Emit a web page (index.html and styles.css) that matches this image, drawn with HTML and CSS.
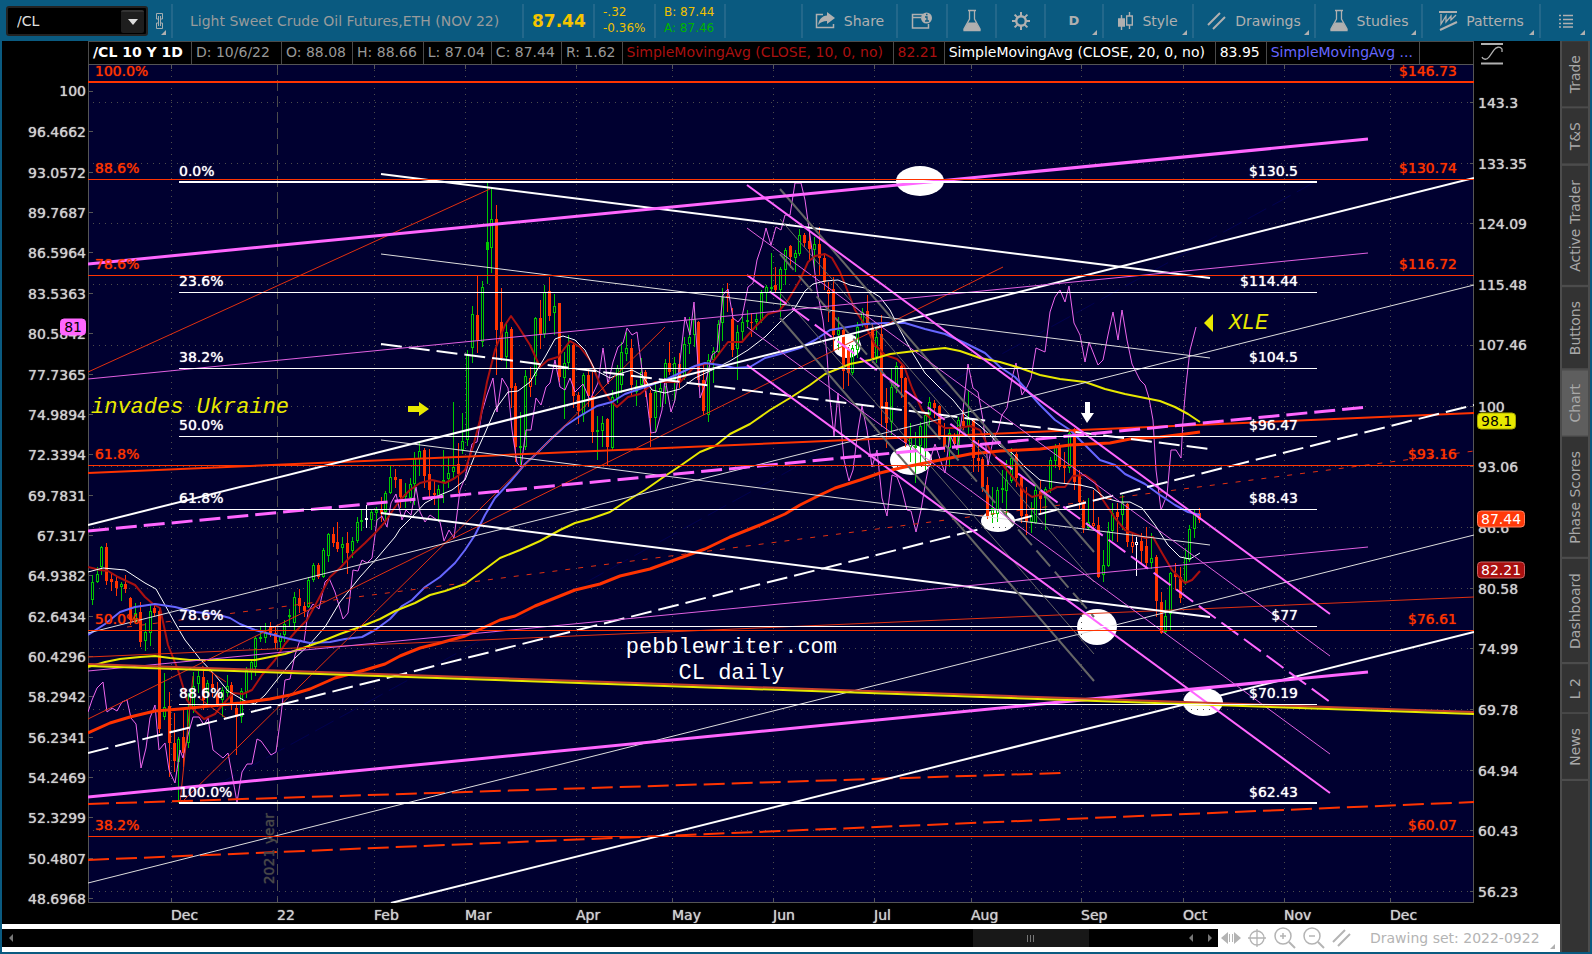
FILE: index.html
```html
<!DOCTYPE html>
<html lang="en">
<head>
<meta charset="utf-8">
<meta name="viewport" content="width=device-width,initial-scale=1.0">
<title>/CL - Charts</title>
<link rel="stylesheet" href="styles.css">
</head>
<body>
<header class="toolbar">
	<div class="symbol_box">
		<input class="symbol" type="text" value="/CL" aria-label="Symbol">
		<button class="drop" aria-label="Symbol list"><svg width="12" height="6" viewBox="0 0 12 6"><path d="M1 0h10L6 6z"/></svg></button>
	</div>
	<button class="tool link" aria-label="Link">
		<svg width="10" height="18" viewBox="0 0 10 18" fill="none" stroke="#a5adb0" stroke-width="1"><path d="M3.500 7H1.500V1.500h6V7H5.500M3.500 11H1.500v5.500h6V11H5.500M3.500 4v10M5.500 4v10"/></svg>
	</button>
	<div class="name">Light Sweet Crude Oil Futures,ETH (NOV 22)</div>
	<div class="last">87.44</div>
	<div class="quote change"><span>-.32</span><span>-0.36%</span></div>
	<div class="quote bidask"><span>B: 87.44</span><span class="ask">A: 87.46</span></div>
	<div class="space"></div>
	<button class="tool share">
		<svg width="21" height="18" viewBox="0 0 21 18"><path d="M8 2.500H1.500v13h17V12" fill="none" stroke="#b0b0b0" stroke-width="1.500"/><path d="M12 0l8 6-8 6V9c-4 0-6 1-9 4 1-6 4-9 9-9.500z" fill="#b0b0b0"/></svg>
		Share
	</button>
	<button class="tool cal" aria-label="Events">
		<svg width="22" height="18" viewBox="0 0 22 18"><path d="M12 2.500H1.500V16h16v-4M1.500 5.500H10" fill="none" stroke="#b0b0b0" stroke-width="1.500"/><circle cx="15.500" cy="6" r="5.500" fill="#b0b0b0"/><path d="M14 5h2v4m-2 0h4M15 2.500h1.500" stroke="#0b5b80" stroke-width="1.300" fill="none"/></svg>
	</button>
	<button class="tool sq" aria-label="Edit studies">
		<svg width="20" height="24" viewBox="0 0 20 24"><path d="M6 1.500h8M7.500 2v8L2 20v1.500h16V20l-5.500-10V2" fill="none" stroke="#b0b0b0" stroke-width="1.300"/><path d="M6 13.500h8l4.500 7.500H1.500z" fill="#b0b0b0"/></svg>
	</button>
	<button class="tool sq" aria-label="Settings">
		<svg width="20" height="20" viewBox="0 0 20 20" fill="none" stroke="#b0b0b0"><circle cx="10" cy="10" r="4.800" stroke-width="2.400"/><path d="M10 1v4M10 15v4M1 10h4M15 10h4M3.600 3.600l3 3M13.400 13.400l3 3M3.600 16.400l3-3M13.400 6.600l3-3" stroke-width="2"/></svg>
	</button>
	<button class="tool period menu">D</button>
	<button class="tool style menu">
		<svg width="16" height="18" viewBox="0 0 16 18" fill="none" stroke="#b0b0b0" stroke-width="1.400"><path d="M3.500 3v15M11.500 0v4M11.500 13v4M8.700 4h5.600v9H8.700z"/><path d="M.700 7h5.600v7H.700z" fill="#b0b0b0"/></svg>
		Style
	</button>
	<button class="tool drawings menu">
		<svg width="20" height="20" viewBox="0 0 20 20" stroke="#b0b0b0" stroke-width="2"><path d="M1 14L13 2M6 18L18 6"/></svg>
		Drawings
	</button>
	<button class="tool studies menu">
		<svg width="20" height="24" viewBox="0 0 20 24"><path d="M6 1.500h8M7.500 2v8L2 20v1.500h16V20l-5.500-10V2" fill="none" stroke="#b0b0b0" stroke-width="1.300"/><path d="M6 13.500h8l4.500 7.500H1.500z" fill="#b0b0b0"/></svg>
		Studies
	</button>
	<button class="tool patterns menu">
		<svg width="20" height="22" viewBox="0 0 20 22" fill="none" stroke="#b0b0b0"><path d="M1 2h18M2 20l17-8" stroke-width="2"/><path d="M3 4v10l5-8v6l5-6v4l5-5" stroke-width="1.300"/></svg>
		Patterns
	</button>
	<button class="tool list menu" aria-label="Layout">
		<svg width="14" height="14" viewBox="0 0 14 14" stroke="#b0b0b0" stroke-width="1.500"><path d="M0 1.500h2M4 1.500h10M0 5.500h2M4 5.500h10M0 9.500h2M4 9.500h10M0 13h2M4 13h10"/></svg>
	</button>
</header>

<div class="main">
	<div class="workspace">
		<div class="chart">
			<div class="info">
				<span class="title">/CL 10 Y 1D</span>
				<span class="date">D: 10/6/22</span>
				<span>O: 88.08</span>
				<span>H: 88.66</span>
				<span>L: 87.04</span>
				<span>C: 87.44</span>
				<span>R: 1.62</span>
				<span class="study sma10">SimpleMovingAvg (CLOSE, 10, 0, no)</span>
				<span class="sma10">82.21</span>
				<span class="study sma20">SimpleMovingAvg (CLOSE, 20, 0, no)</span>
				<span class="sma20">83.95</span>
				<span class="sma50">SimpleMovingAvg ...</span>
			</div>
			<div class="scale_icon">
				<svg width="22" height="24" viewBox="0 0 22 24" fill="none" stroke="#b0b0b0"><path d="M0 2h22M0 21.500h22" stroke-width="2"/><path d="M1 15c1 3 5 3 7 0l5-7c2-3 6-4 8-1v3" stroke-width="1.300"/></svg>
			</div>
			<div class="axis left" id="left"></div>
			<div class="plot" id="plot">
				<svg id="canvas" viewBox="88 64 1386 839" preserveAspectRatio="none"></svg>
				<div class="year">2021 year</div>
				<div class="note ukraine">invades Ukraine</div>
				<div class="note xle">XLE</div>
				<div class="note sign">pebblewriter.com<br>CL daily</div>
			</div>
			<div class="axis right" id="right"></div>
			<div class="months" id="months"></div>
		</div>
		<footer class="bottom">
			<div class="scroll">
				<button aria-label="Scroll to start"><svg width="5" height="8" viewBox="0 0 5 8"><path d="M4 0v8L0 4z"/></svg></button>
				<div class="track"><div class="thumb"><i></i><i></i><i></i></div></div>
				<button aria-label="Scroll left"><svg width="5" height="8" viewBox="0 0 5 8"><path d="M4 0v8L0 4z"/></svg></button>
				<button aria-label="Scroll right"><svg width="5" height="8" viewBox="0 0 5 8"><path d="M1 0v8l4-4z"/></svg></button>
			</div>
			<div class="zoomers">
				<button aria-label="Fit"><svg width="20" height="14" viewBox="0 0 20 14"><path d="M7 1v12L0 7zM13 1v12l7-6z" fill="#b4b4b4"/><path d="M8.500 3v8M11.500 3v8" stroke="#b4b4b4"/></svg></button>
				<button aria-label="Crosshair"><svg width="18" height="18" viewBox="0 0 18 18" fill="none" stroke="#b4b4b4" stroke-width="1.300"><circle cx="9" cy="9" r="7"/><path d="M9 0v18M0 9h18"/></svg></button>
				<button aria-label="Zoom in"><svg width="22" height="22" viewBox="0 0 22 22" fill="none" stroke="#b4b4b4" stroke-width="1.500"><circle cx="9" cy="9" r="8"/><path d="M9 6v6M6 9h6"/><path d="M15 15l6 6" stroke-width="2"/></svg></button>
				<button aria-label="Zoom out"><svg width="22" height="22" viewBox="0 0 22 22" fill="none" stroke="#b4b4b4" stroke-width="1.500"><circle cx="9" cy="9" r="8"/><path d="M6 9h6"/><path d="M15 15l6 6" stroke-width="2"/></svg></button>
				<button aria-label="Drawing tool"><svg width="20" height="18" viewBox="0 0 20 18" stroke="#b4b4b4" stroke-width="2"><path d="M1 13L13 1M6 17L18 5"/></svg></button>
			</div>
			<button class="set">Drawing set: 2022-0922</button>
		</footer>
	</div>
	<nav class="tabs">
		<button>Trade</button>
		<button>T&amp;S</button>
		<button>Active Trader</button>
		<button>Buttons</button>
		<button class="on">Chart</button>
		<button>Phase Scores</button>
		<button>Dashboard</button>
		<button>L 2</button>
		<button>News</button>
		<div class="rest"></div>
	</nav>
</div>
<script src="script.js"></script>
</body>
</html>
```

FILE: styles.css
```css
* {
    box-sizing: border-box;
}

body {
    display: flex;
    flex-direction: column;
    height: 100vh;
    margin: 0;
    padding: 0 2px 2px;
    background: #0a5a80;
    color: #b0b0b0;
    font: 14px/18px "DejaVu Sans", sans-serif;
    overflow: hidden;
}

button {
    margin: 0;
    padding: 0;
    border: 0;
    background: none;
    color: inherit;
    font: inherit;
}

svg {
    display: block;
    flex: none;
}

/* toolbar */
.toolbar {
    display: flex;
    flex: none;
    height: 41px;
    padding: 4px 0 3px;
    white-space: nowrap;
}

.toolbar > div,
.tool {
    display: flex;
    flex: none;
    align-items: center;
    border-right: 2px solid #23688b;
}

.toolbar .symbol_box {
    width: 142px;
    height: 30px;
    margin: 2px 0 0 4px;
    padding-right: 2px;
    border: 2px solid #232323;
    border-radius: 3px;
    background: #000;
}

.symbol {
    flex: 1;
    min-width: 0;
    padding: 0 0 0 9px;
    border: 0;
    background: none;
    color: #e0e0e0;
    font: inherit;
}

.drop {
    display: flex;
    align-items: center;
    justify-content: center;
    width: 23px;
    height: 23px;
    border-top: 2px solid #333;
    border-radius: 2px;
    background: #1e1e1e;
    fill: #ddd;
}

.tool {
    position: relative;
    justify-content: center;
    gap: 8px;
}

.tool.link {
    width: 25px;
}

.tool.link::after,
.menu::after,
.set::after {
    content: "";
    position: absolute;
    right: 5px;
    bottom: 3px;
    width: 0;
    height: 0;
    border-left: 5px solid transparent;
    border-bottom: 5px solid #b0b0b0;
}

.toolbar .name {
    width: 351px;
    padding-left: 17px;
    color: #989b9c;
}

.toolbar .last {
    width: 71px;
    padding-left: 8px;
    color: #f5c400;
    font-size: 17px;
    font-weight: bold;
}

.toolbar .quote {
    flex-direction: column;
    align-items: flex-start;
    padding-left: 8px;
    color: #f0c000;
    font-size: 12px;
    line-height: 16px;
}

.toolbar .change {
    width: 61px;
}

.toolbar .bidask {
    width: 70px;
}

.ask {
    color: #00b400;
}

.toolbar .space {
    flex: 1;
}

.share {
    width: 95px;
}

.cal {
    width: 50px;
}

.sq {
    width: 49px;
}

.period {
    width: 58px;
    font-weight: bold;
    font-size: 13px;
}

.style {
    width: 90px;
}

.drawings {
    width: 122px;
}

.studies {
    width: 107px;
}

.patterns {
    width: 118px;
}

.toolbar .list {
    width: 49px;
    border: 0;
}

/* chart */
.main {
    display: flex;
    flex: 1;
    min-height: 0;
}

.workspace {
    display: flex;
    flex: 1;
    flex-direction: column;
    min-width: 0;
}

.chart {
    display: grid;
    flex: 1;
    grid-template: 23px 1fr 21px / 86px 1fr 86px;
    min-height: 0;
    background: #000;
}

.info {
    display: flex;
    grid-column: 2;
    overflow: hidden;
    border: solid #4a4a4a;
    border-width: 1px 1px 0;
    color: #989898;
    line-height: 20px;
    white-space: nowrap;
}

.info span {
    flex: none;
    padding: 0 6px 0 4px;
    border-right: 1px solid #4a4a4a;
}

.info .title {
    width: 103px;
    color: #fff;
    font-weight: bold;
}

.info .date {
    width: 90px;
}

.info .study {
    width: 271px;
}

.info .sma10 {
    color: #aa1010;
}

.info .sma20 {
    color: #fff;
}

.info .sma50 {
    color: #6666ff;
}

.scale_icon {
    padding: 1px 0 0 7px;
}

.axis {
    position: relative;
    grid-row: 2;
    color: #d0d0d0;
    line-height: 16px;
}

.left {
    grid-column: 1;
}

.right {
    grid-column: 3;
}

.axis span,
.months span,
.level {
    position: absolute;
    transform: translateY(-50%);
    text-shadow: 0 0 1px currentColor;
}

.left span {
    right: 2px;
}

.right span {
    left: 4px;
}

.axis .badge {
    padding: 0 3px;
    border: 1px solid #bdb76b;
    border-radius: 4px;
    color: #000;
    line-height: 15px;
    text-shadow: none;
}

.right .badge {
    left: 3px;
}

.axis .xle_last {
    border-color: #ff66ff;
    background: #ff66ff;
}

.axis .avg100 {
    border-color: #a8a800;
    background: #e8e800;
}

.axis .price {
    border-color: #ff8060;
    background: #ff3a0a;
    color: #fff;
}

.axis .avg10 {
    border-color: #c86060;
    background: #aa1010;
    color: #fff;
}

.plot {
    position: relative;
    grid-column: 2;
    min-width: 0;
    background: #000030;
}

#canvas {
    position: absolute;
    width: 100%;
    height: 100%;
}

#canvas * {
    vector-effect: non-scaling-stroke;
}

.crisp {
    shape-rendering: crispEdges;
}

.level {
    line-height: 16px;
}

.level.white {
    color: #fff;
}

.level.red {
    color: #ff3300;
}

.months {
    position: relative;
    grid-column: 2;
    grid-row: 3;
    color: #d0d0d0;
}

.months span {
    top: 55%;
}

.year {
    position: absolute;
    left: 12.4%;
    bottom: 2.2%;
    color: #484848;
    text-shadow: 0 0 1px currentColor;
    writing-mode: vertical-rl;
    transform: rotate(180deg);
}

.note {
    position: absolute;
    color: #fff;
    font: 22px/26px "Liberation Mono", monospace;
    white-space: nowrap;
}

.ukraine {
    left: 0;
    padding-left: 3px;
    top: 39.5%;
    color: #e8e800;
    font-style: italic;
}

.xle {
    left: 82.3%;
    top: 29.4%;
    color: #e8e800;
    font-style: italic;
}

.sign {
    left: 38.8%;
    top: 68%;
    text-align: center;
}

/* scroll bar and zoom row */
.bottom {
    display: flex;
    flex: none;
    align-items: center;
    height: 28px;
    background: #fff;
    color: #b4b4b4;
}

.scroll {
    display: flex;
    flex: 1;
    align-items: center;
    height: 18px;
    background: #000;
}

.scroll button {
    display: flex;
    justify-content: center;
    width: 18px;
    fill: #777;
}

.track {
    flex: 1;
    height: 18px;
}

.thumb {
    display: flex;
    align-items: center;
    justify-content: center;
    gap: 2px;
    width: 10%;
    height: 18px;
    margin-left: 82%;
    background: #181818;
}

.thumb i {
    width: 1px;
    height: 7px;
    background: #777;
}

.zoomers {
    display: flex;
    align-items: center;
    justify-content: space-between;
    width: 131px;
    margin-left: 3px;
}

.set {
    position: relative;
    width: 208px;
    height: 28px;
    padding-left: 18px;
    text-align: left;
}

/* side tabs */
.tabs {
    display: flex;
    flex: none;
    flex-direction: column;
    gap: 2px;
    width: 30px;
    padding: 0 2px;
    background: #4c4c4c;
    color: #a8a8a8;
}

.tabs button {
    display: flex;
    flex: none;
    align-items: center;
    justify-content: center;
    width: 26px;
    padding: 13px 0 14px;
    background: #333;
    white-space: nowrap;
    writing-mode: vertical-rl;
    transform: rotate(180deg);
}

.tabs .on {
    background: #5e5e5e;
}

.rest {
    flex: 1;
    background: #333;
}
```

FILE: script.js
```js
var X0 = 88, Y0 = 64, W = 1386, H = 839;
var RED = "#ff3300", MAG = "#ff66ff", WHITE = "#fff", GRAY = "#666", YEL = "#e8e800";
var canvas = document.querySelector("#canvas");

function add(tag, attrs) {
	var el = document.createElementNS("http://www.w3.org/2000/svg", tag);
	for (var k in attrs) {
		el.setAttribute(k, attrs[k]);
	}
	canvas.appendChild(el);
	return el;
}

function line(x1, y1, x2, y2, color, w, dash) {
	var a = {x1: x1, y1: y1, x2: x2, y2: y2, stroke: color, "stroke-width": w || 1};
	if (dash) {
		a["stroke-dasharray"] = dash;
	}
	if (x1 == x2 || y1 == y2) {
		a["class"] = "crisp";
	}
	add("line", a);
}

function curve(points, color, w) {
	add("polyline", {points: points, fill: "none", stroke: color, "stroke-width": w, "stroke-linejoin": "round"});
}

function label(parent, text, cls, css) {
	var el = document.createElement("span");
	el.textContent = text;
	el.className = cls;
	for (var k in css) {
		el.style[k] = css[k];
	}
	document.querySelector(parent).appendChild(el);
}

function px(x) { return (x - X0) / W * 100 + "%"; }
function py(y) { return (y - Y0) / H * 100 + "%"; }

// highlighted zones
[[920, 181, 24, 15], [847, 346, 14, 12], [911, 460, 21, 15], [998, 521, 17, 11], [1097, 627, 20, 18], [1203, 702, 20, 14]].forEach(function(e) {
	add("ellipse", {cx: e[0], cy: e[1], rx: e[2], ry: e[3], fill: "#fff"});
});

// grid and axes
var months = [["Dec", 171], ["22", 277], ["Feb", 374], ["Mar", 465], ["Apr", 576], ["May", 672], ["Jun", 773], ["Jul", 874], ["Aug", 971], ["Sep", 1081], ["Oct", 1183], ["Nov", 1284], ["Dec", 1390]];
months.forEach(function(m) {
	var x = m[1] + .5;
	line(x, 64, x, 903, "#4c4c4c", 1, m[0] == "22" ? "11 5" : "1 5");
	line(x, 64, x, 69, "#555");
	line(x, 898, x, 903, "#555");
	label("#months", m[0], "", {left: px(m[1])});
});

["143.3", "133.35", "124.09", "115.48", "107.46", "100", "93.06", "86.6", "80.58", "74.99", "69.78", "64.94", "60.43", "56.23"].forEach(function(t, i) {
	var y = Math.round(102 + i * 60.7) + .5;
	line(93, y, 1474, y, "#4c4c4c", 1, "1 5");
	line(1470, y, 1474, y, "#555");
	label("#right", t, "", {top: py(y)});
});

["100", "96.4662", "93.0572", "89.7687", "86.5964", "83.5363", "80.5842", "77.7365", "74.9894", "72.3394", "69.7831", "67.317", "64.9382", "62.6434", "60.4296", "58.2942", "56.2341", "54.2469", "52.3299", "50.4807", "48.6968"].forEach(function(t, i) {
	var y = Math.round(91 + i * 40.36) + .5;
	line(88, y, 93, y, "#555");
	label("#left", t, "", {top: py(y)});
});
line(88.5, 64, 88.5, 903, "#555");
line(1473.5, 64, 1473.5, 903, "#555");
line(88, 64.5, 1474, 64.5, "#555");
line(88, 902.5, 1474, 902.5, "#555");

label("#left", "81", "badge xle_last", {top: py(327)});
label("#right", "98.1", "badge avg100", {top: py(421)});
label("#right", "87.44", "badge price", {top: py(519)});
label("#right", "82.21", "badge avg10", {top: py(570)});

line(217, 785, 1313, 183, "#000050", 1, "21 7");

// daily bars: type, high, body top, body bottom, low
var bars = "g575 582 600 605,g567 574 582 583,g546 547 567 575,r543 547 581 585,r573 579 582 591,r577 581 588 596,g582 584 587 601,r575 584 589 593,r597 598 620 625,g603 613 622 623," +
	"r602 612 642 647,g623 632 641 651,g605 611 633 646,r603 608 613 617,r608 611 729 733,g673 707 717 720,r692 706 743 777,r713 743 761 772,g737 739 762 803,r710 737 753 767," +
	"g693 707 743 748,g672 686 710 713,g671 676 684 693,r667 677 700 710,g680 683 693 704,r673 684 688 697,r682 693 704 707,g687 690 700 717,g675 686 693 697,r682 685 703 710," +
	"r703 708 717 755,g688 691 717 723,g667 670 692 698,g659 662 672 680,g636 638 667 676,g627 637 638 642,g623 632 638 643,r622 627 633 637,r627 633 643 649,g633 637 642 653," +
	"g620 624 635 642,g609 615 617 627,g592 597 623 630,r589 598 606 613,r602 606 611 617,g577 580 607 608,g563 565 580 582,r563 565 577 579,g548 550 577 578,g533 534 556 562," +
	"r527 534 543 547,r522 542 549 552,g537 544 548 563,r532 543 553 574,g537 541 551 558,g517 522 541 543,g509 520 522 531,w505 518 520 528,g510 512 520 530,g507 510 513 525," +
	"r497 509 514 522,g491 493 512 522,g466 477 493 494,r469 477 480 488,r479 479 497 508,g483 494 497 508,g478 484 498 503,g452 458 484 505,g443 451 459 476,r448 450 476 488," +
	"r449 474 490 497,r480 493 495 505,g485 489 497 522,g450 480 482 503,g458 473 479 488,g402 467 472 480,r443 464 474 493,g413 441 450 454,g350 354 440 446,g306 314 348 363," +
	"r276 315 340 353,g281 287 342 347,G183 242 250 284,g188 219 248 273,r205 219 330 375,r288 322 358 361,g323 332 357 368,r327 329 388 408,r383 386 447 462,g412 446 448 465," +
	"g370 376 447 450,R367 378 387 397,g317 318 376 385,r300 318 335 349,g285 292 334 338,r277 291 316 321,g294 306 313 335,r303 303 377 382,g352 363 378 419,g335 345 363 370," +
	"r342 345 396 408,r392 395 411 424,g373 375 415 422,r368 375 396 407,r372 396 432 443,g416 430 431 460,g416 423 431 447,r418 419 447 466,g390 397 448 450,g365 368 398 403," +
	"g342 352 385 393,g332 348 354 361,r339 348 385 397,g380 386 392 406,g358 372 385 388,r370 372 390 397,r390 393 418 447,g383 392 418 433,g383 388 392 407,g359 363 387 404," +
	"r342 363 372 375,g357 363 380 403,r353 364 382 388,g337 344 378 380,g317 337 344 354,g310 319 335 347,r321 322 380 387,r363 380 411 415,g354 360 415 422,g347 351 360 383," +
	"g320 324 352 354,g288 297 323 341,r283 296 298 312,r308 319 350 357,g325 332 349 380,g317 322 332 340,g310 320 322 327,r313 322 323 337,g313 319 322 330,g290 293 321 323," +
	"g285 287 293 302,g253 287 289 293,r267 285 290 292,g267 269 290 317,g248 250 270 285,r245 246 257 268,g250 253 258 272,g229 235 254 256,r233 235 243 247,r230 241 249 260," +
	"g237 244 250 270,r227 244 258 276,r253 258 282 290,R282 290 294 322,r277 289 335 350,g317 330 335 350,r327 330 371 389,r347 350 373 386,g345 348 373 375,g322 327 350 358," +
	"g308 312 323 327,r295 311 325 328,r323 328 358 363,g327 337 357 363,r315 334 409 427,r388 402 423 448,g368 387 422 435,g362 366 388 393,r365 366 378 398,r377 378 443 447," +
	"g423 438 447 462,g432 446 448 483,g422 426 446 465,g413 415 450 470,g397 402 415 425,r400 403 408 418,r405 406 436 437,r423 435 447 452,g427 433 448 467,r433 437 444 448," +
	"g417 420 445 457,r410 421 426 430,g390 419 426 435,r418 419 458 472,r440 458 461 472,r457 459 487 492,r477 485 516 519,g487 508 515 523,g487 490 514 522,g470 488 490 503," +
	"g460 480 491 515,g448 458 481 483,r452 454 478 487,r475 477 516 523,r487 514 522 535,g502 515 522 533,g485 490 523 524,r480 491 499 515,g487 489 498 530,g457 460 489 493," +
	"g444 447 461 468,r443 446 467 470,r452 466 468 483,g430 433 468 473,r428 429 482 490,r470 475 502 510,r500 504 528 533,g498 522 528 530,R490 523 526 528,r517 525 577 578," +
	"g550 565 575 582,g522 531 566 567,g503 513 531 541,r503 512 517 542,g495 502 515 530,r503 504 542 547,R532 542 547 553,w537 542 545 576,r533 541 551 563,r527 546 563 568," +
	"g533 558 563 569,r555 557 601 617,r592 602 633 634,g600 616 632 634,g572 573 614 631,r563 574 577 590,r567 577 598 603,g548 558 582 585,g525 529 560 562,g510 513 529 538,r508 513 520 523";
var barColor = {g: "#00c800", G: "#00c800", r: RED, R: RED, w: "#fff"};

bars.split(",").forEach(function(b, i) {
	var type = b.charAt(0), v = b.slice(1).split(" ").map(Number);
	var x = Math.round(91.8 + i * 4.814), c = barColor[type];
	line(x + .5, v[0], x + .5, v[1], c);
	line(x + .5, v[2], x + .5, v[3], c);
	if (type == "r" || type == "G") {
		add("rect", {x: x - 1, y: v[1], width: 3, height: Math.max(v[2] - v[1], 1), fill: c, "class": "crisp"});
	} else {
		add("rect", {x: x - .5, y: v[1] + .5, width: 2, height: Math.max(v[2] - v[1] - 1, 1), fill: "none", stroke: c, "class": "crisp"});
	}
});

// XLE comparison
curve("88,712 92,700 97,688 103,682 107,712 112,708 117,711 122,702 127,700 131,718 136,724 141,768 146,748 150,718 155,705 159,750 165,743 169,770 175,783 180,750 183,758 188,735 193,717 199,717 204,725 208,718 213,750 223,758 228,753 233,780 237,802 242,772 247,764 252,764 257,739 261,741 271,755 276,752 281,715 285,680 290,679 295,655 300,640 304,642 308,612 313,604 319,609 325,582 329,578 335,592 343,619 348,613 353,570 358,571 362,560 367,563 372,558 377,520 382,516 387,527 391,503 396,494 402,520 406,510 411,515 416,487 420,512 425,522 430,515 440,522 444,541 449,530 454,538 460,490 465,478 472,444 477,442 482,412 487,395 493,378 497,412 502,378 508,388 512,430 517,463 521,467 526,430 531,430 536,398 541,405 546,387 550,383 555,360 560,387 565,390 570,378 575,392 583,384 590,400 598,383 603,348 608,384 613,362 618,347 623,343 627,328 632,335 637,332 643,378 646,392 651,433 656,432 662,410 665,378 671,412 675,400 679,370 685,317 690,335 694,302 700,398 705,385 712,355 717,351 723,295 728,289 733,318 738,322 742,317 748,287 753,283 757,260 762,245 766,228 771,245 776,227 781,230 785,215 790,215 795,183 801,183 805,200 812,250 817,290 823,320 827,355 830,400 834,436 838,393 844,460 849,481 853,470 858,430 862,406 867,430 872,467 877,450 882,498 887,516 892,475 897,477 902,490 907,510 911,511 916,532 921,510 926,480 930,460 935,444 940,459 945,473 950,435 957,450 963,410 968,364 973,388 978,392 983,420 988,465 993,440 998,430 1002,415 1007,408 1012,378 1016,363 1022,395 1027,387 1031,378 1036,348 1045,352 1050,312 1055,297 1060,290 1065,302 1069,286 1074,323 1080,335 1085,362 1089,342 1098,365 1103,360 1108,335 1113,312 1118,340 1122,310 1127,340 1132,364 1140,380 1145,385 1149,398 1153,420 1156,470 1161,510 1167,495 1171,450 1176,450 1181,458 1183,420 1186,385 1190,350 1196,327", "#ee66ee", 1);

// moving averages
curve("88,567 100,570 108,571 118,577 135,585 145,597 153,604 160,608 168,645 178,670 187,700 193,709 204,719 215,714 225,702 233,693 243,694 252,690 262,675 275,660 285,644 297,630 307,620 318,600 330,577 340,568 352,555 365,543 376,532 385,522 393,510 400,500 410,490 420,483 432,480 445,483 455,478 465,470 473,447 480,420 487,382 495,350 505,325 511,316 518,326 530,345 540,367 548,360 558,357 570,341 580,347 590,360 600,384 610,400 617,407 628,397 640,394 655,382 668,382 680,382 695,366 712,363 728,342 742,342 755,327 768,314 779,311 788,300 800,280 808,262 815,256 825,254 832,258 840,272 848,292 855,310 865,325 875,345 885,355 897,359 904,366 912,388 922,410 932,420 945,428 958,428 970,426 980,430 990,450 1002,464 1015,480 1025,492 1032,497 1043,494 1057,487 1065,487 1073,476 1085,475 1095,482 1103,500 1115,518 1125,530 1135,534 1145,538 1153,537 1162,553 1172,570 1185,583 1192,580 1200,571", "#aa1010", 2);
curve("88,572 103,568 125,570 145,583 156,589 165,605 175,623 185,640 200,659 215,675 228,691 245,701 255,704 265,695 280,676 295,658 310,644 325,627 340,602 360,577 378,557 395,537 400,529 412,517 425,503 440,495 452,490 465,480 475,455 485,433 495,410 508,392 518,391 530,382 545,357 555,339 563,336 575,340 585,350 595,370 610,378 622,373 632,370 642,375 652,390 665,393 680,389 695,378 712,370 730,361 748,350 765,337 780,322 793,311 805,291 813,284 825,281 838,280 850,285 865,288 880,297 890,310 900,330 912,352 925,373 940,388 953,400 965,415 980,426 990,435 1000,446 1012,453 1025,467 1040,480 1060,483 1080,485 1093,488 1105,498 1120,502 1130,502 1142,508 1155,525 1168,545 1180,557 1190,559 1200,553", "#fff", 1);
curve("88,635 105,624 120,612 135,607 155,604 175,607 195,612 215,614 230,618 240,624 255,630 270,634 290,639 310,643 330,642 345,639 362,637 375,630 390,619 402,606 412,600 425,587 440,577 455,563 465,550 475,535 485,515 495,498 510,482 525,464 535,455 550,440 565,426 580,416 597,406 612,402 625,394 645,387 665,380 680,373 695,366 705,363 720,365 735,368 750,367 765,358 780,354 800,348 815,340 830,330 848,327 865,324 885,323 905,323 925,329 945,334 965,343 985,353 1000,367 1015,377 1025,388 1040,405 1055,420 1070,430 1085,445 1100,460 1115,465 1125,474 1145,484 1160,495 1175,505 1188,512 1200,515", "#6666ff", 2);
curve("88,667 105,662 120,659 140,657 155,656 170,658 190,660 215,660 255,660 270,657 285,654 300,649 320,642 340,634 360,627 380,619 395,611 415,603 430,595 445,591 465,584 480,573 500,558 520,550 540,541 560,530 575,523 590,519 610,512 625,502 645,490 665,476 680,466 700,452 715,446 730,434 750,424 770,410 790,398 810,385 825,374 850,364 870,360 890,354 915,351 945,348 960,351 980,358 1000,362 1020,368 1040,375 1060,379 1085,382 1105,389 1125,394 1145,398 1160,401 1175,407 1188,414 1200,422", YEL, 2);
curve("88,733 110,723 130,717 155,711 180,709 210,706 240,703 270,699 290,695 310,689 335,678 365,670 385,664 400,656 420,648 440,643 465,636 485,627 500,620 515,616 535,606 555,598 575,590 600,584 620,576 650,569 680,558 705,549 730,537 760,525 785,514 800,505 820,495 835,488 860,480 880,473 900,468 920,464 940,460 970,454 1000,451 1040,449 1070,445 1110,443 1130,439 1160,437 1185,434 1200,432", RED, 3);

// red trend lines
line(88, 473, 1474, 413, RED, 2);
line(88, 657, 1474, 597, "#e03010", 1);
line(88, 804, 1061, 773, RED, 2, "21 7");
line(88, 860, 1474, 802, RED, 2, "21 7");
line(127, 627, 1474, 451, "#e03010", 1, "5 8");
line(88, 372, 490, 189, "#e03010", 1);
line(88, 719, 1003, 267, "#e03010", 1);
line(182, 802, 665, 327, "#e03010", 1);
line(180, 803, 193, 676, "#e03010", 1);
line(202, 666, 226, 682, "#e03010", 1);
line(199, 698, 226, 718, "#e03010", 1);

// white trend lines
line(88, 525, 1474, 178, WHITE, 2);
line(88, 633, 1474, 285, "#ddd", 1);
line(88, 753, 1474, 405, WHITE, 2, "21 7");
line(88, 883, 1474, 535, "#ddd", 1);
line(391, 903, 1474, 632, WHITE, 2);
line(381, 174, 1210, 278, WHITE, 2);
line(381, 254, 1210, 358, "#ddd", 1);
line(381, 344, 1210, 449, WHITE, 2, "21 7");
line(381, 440, 1210, 545, "#ddd", 1);
line(381, 513, 1210, 617, WHITE, 2);

// gray channel
line(780, 189, 1094, 552, GRAY, 2);
line(780, 219, 1094, 582, GRAY, 1);
line(780, 254, 1094, 617, GRAY, 2, "21 7");
line(780, 293, 1094, 654, GRAY, 1);
line(780, 318, 1094, 681, GRAY, 2);

// magenta channels
line(88, 264, 1368, 139, MAG, 3);
line(88, 379, 1368, 253, "#e060e0", 1);
line(88, 531, 1368, 407, MAG, 3, "21 7");
line(88, 671, 1368, 547, "#e060e0", 1);
line(88, 797, 1368, 672, MAG, 3);
line(747, 185, 1330, 614, MAG, 2);
line(747, 228, 1330, 656, "#e060e0", 1);
line(747, 275, 1330, 702, MAG, 2, "21 7");
line(747, 327, 1330, 754, "#e060e0", 1);
line(747, 365, 1330, 793, MAG, 2);

line(88, 664, 1474, 712, "#c8402c", 2);
line(88, 666, 1474, 714, YEL, 2);

// retracement levels
[["100.0%", "$146.73", 82, 2], ["88.6%", "$130.74", 179, 1], ["78.6%", "$116.72", 275, 1], ["61.8%", "$93.16", 465, 1], ["50.0%", "$76.61", 630, 1], ["38.2%", "$60.07", 836, 1]].forEach(function(l) {
	var y = l[3] == 1 ? l[2] + .5 : l[2];
	line(88, y, 1474, y, RED, l[3]);
	label("#plot", l[0], "level red", {left: px(95), top: py(l[2] - 11)});
	label("#plot", l[1], "level red", {right: (1474 - 1457) / W * 100 + "%", top: py(l[2] - 11)});
});
[["0.0%", "$130.5", 182, 2], ["23.6%", "$114.44", 292, 1], ["38.2%", "$104.5", 368, 1], ["50.0%", "$96.47", 436, 1], ["61.8%", "$88.43", 509, 1], ["78.6%", "$77", 626, 1], ["88.6%", "$70.19", 704, 1], ["100.0%", "$62.43", 803, 2]].forEach(function(l) {
	var y = l[3] == 1 ? l[2] + .5 : l[2];
	line(179, y, 1317, y, WHITE, l[3]);
	label("#plot", l[0], "level white", {left: px(179), top: py(l[2] - 11)});
	label("#plot", l[1], "level white", {right: (1474 - 1298) / W * 100 + "%", top: py(l[2] - 11)});
});

// arrows
add("path", {d: "M408 406h11v-4l10 7-10 7v-4h-11z", fill: YEL});
add("path", {d: "M1085 402h5v11h4l-7 10-6-10h4z", fill: "#fff"});
add("path", {d: "M1213 314v18l-9-9z", fill: YEL});
```
